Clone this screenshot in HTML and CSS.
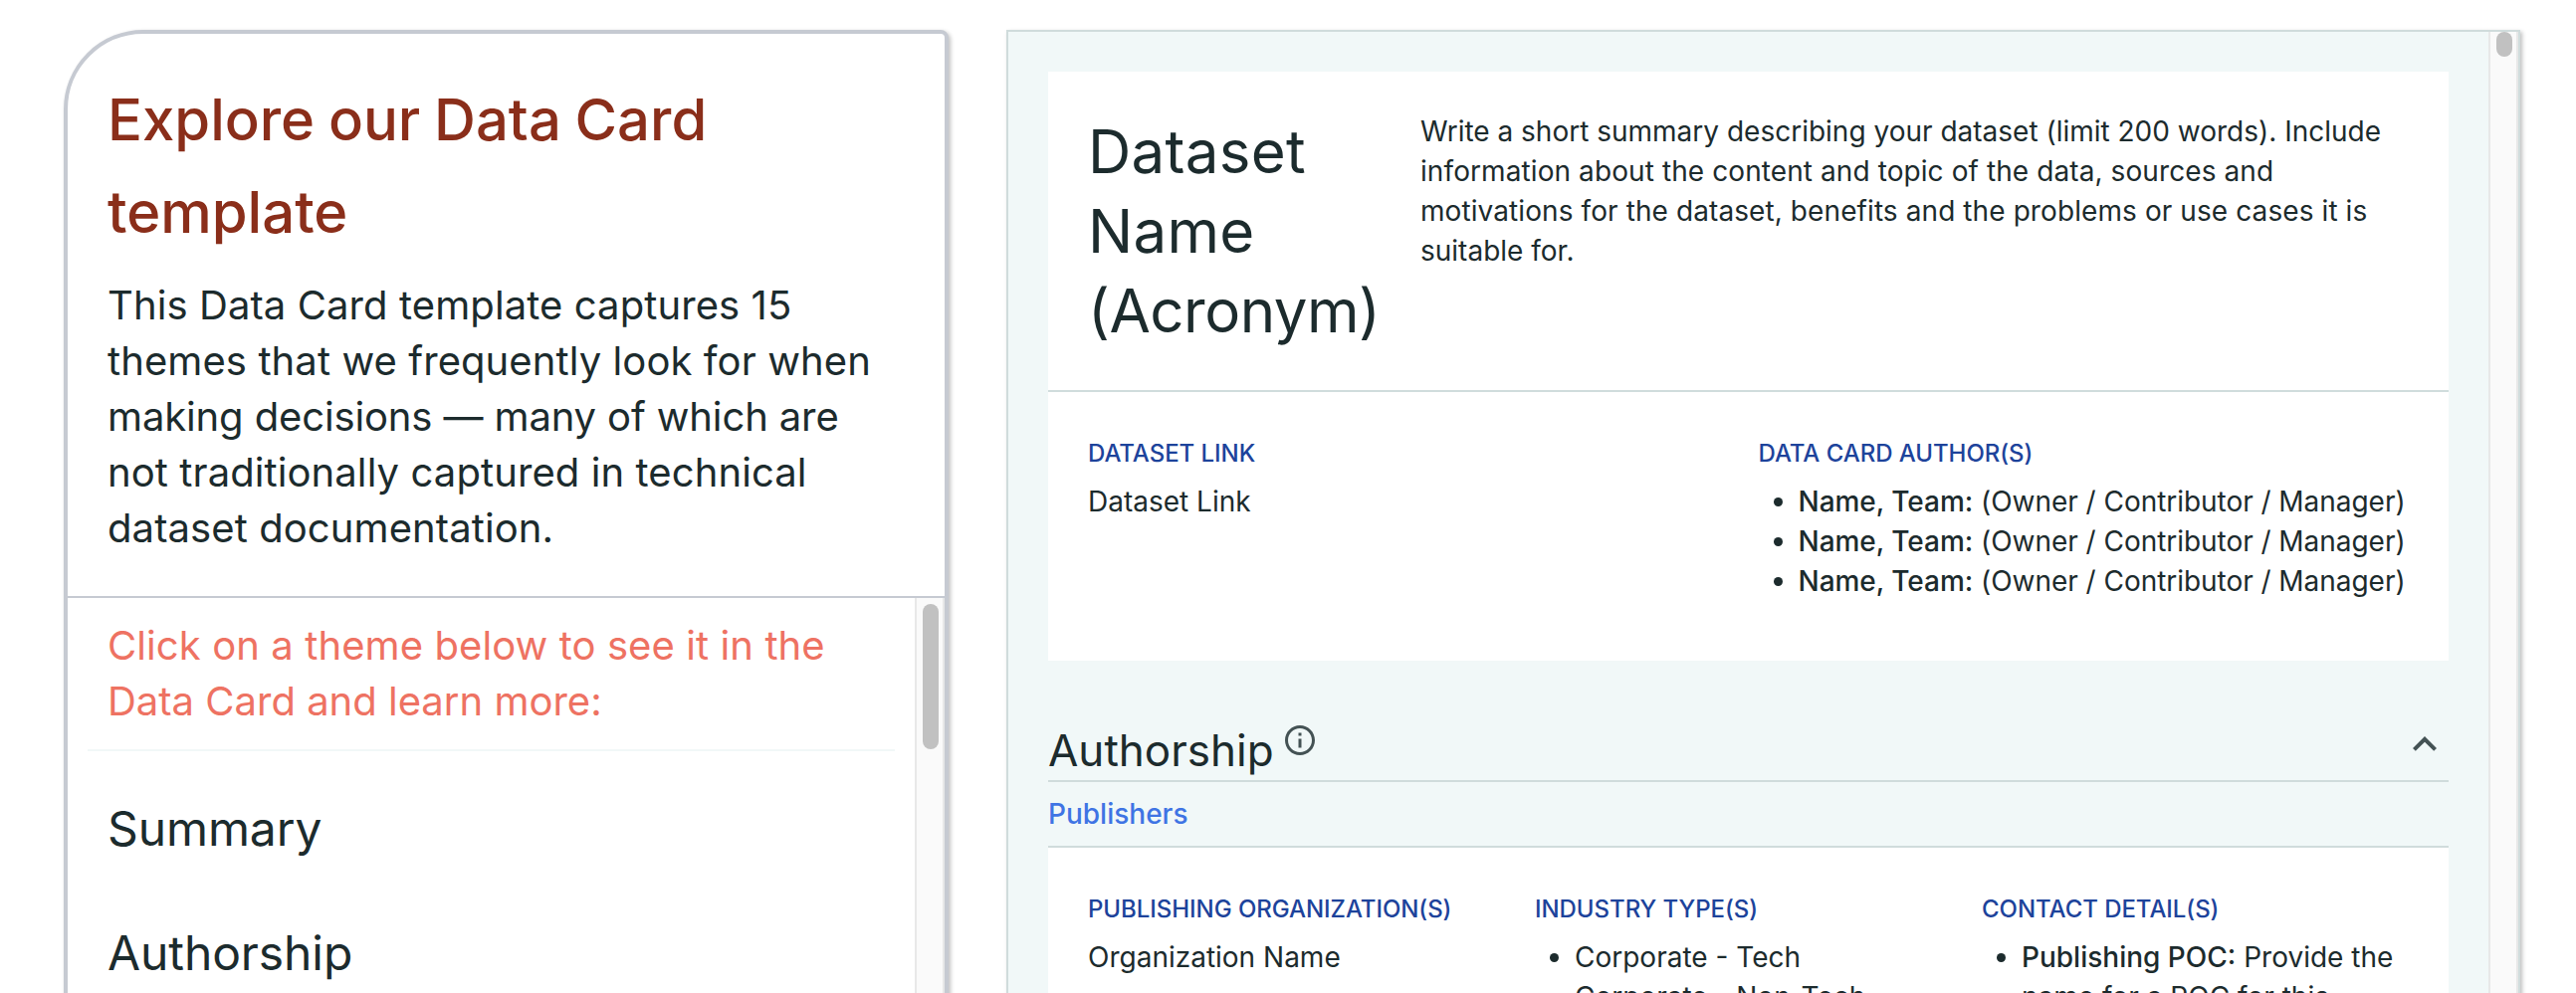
FILE: index.html
```html
<!DOCTYPE html>
<html lang="en">
<head>
<meta charset="utf-8">
<title>Data Card template</title>
<link rel="stylesheet" href="styles.css">
</head>
<body>
<main class="layout">
  <aside class="guide">
    <header class="guide-intro">
      <h1 class="guide-title">Explore our Data Card template</h1>
      <p class="guide-text">This Data Card template captures 15 themes that we frequently look for when <span class="tight">making decisions — many of which are</span> not traditionally captured in technical dataset documentation.</p>
    </header>
    <div class="guide-body">
      <div class="guide-scroll">
        <p class="guide-hint"><span class="wide">Click on a theme below to see it in the</span> Data Card and learn more:</p>
        <ul class="themes">
          <li class="theme">Summary</li>
          <li class="theme">Authorship</li>
        </ul>
      </div>
      <div class="track track-guide"><div class="thumb thumb-guide"></div></div>
    </div>
  </aside>

  <section class="preview">
    <div class="preview-scroll">
      <article class="card">
        <div class="summary">
          <h2 class="dataset-name">Dataset Name <span class="acronym">(Acronym)</span></h2>
          <p class="dataset-text">Write a short summary describing your dataset (limit 200 words). Include <span class="wide">information about the content and topic of the data, sources and motivations for the dataset, benefits and the problems or use cases it is</span> suitable for.</p>
        </div>
        <div class="fields fields-two">
          <div class="field">
            <h3 class="label">Dataset Link</h3>
            <p class="value">Dataset Link</p>
          </div>
          <div class="field">
            <h3 class="label">Data Card Author(s)</h3>
            <ul class="list authors">
              <li><b>Name, Team:</b> (Owner / Contributor / Manager)</li>
              <li><b>Name, Team:</b> (Owner / Contributor / Manager)</li>
              <li><b>Name, Team:</b> (Owner / Contributor / Manager)</li>
            </ul>
          </div>
        </div>
      </article>

      <div class="section-head">
        <h2 class="section-title">Authorship</h2>
        <svg class="info" viewBox="0 0 24 24"><path d="M11 7h2v2h-2zm0 4h2v6h-2zm1-9C6.48 2 2 6.48 2 12s4.480 10 10 10 10-4.480 10-10S17.520 2 12 2zm0 18c-4.410 0-8-3.590-8-8s3.590-8 8-8 8 3.590 8 8-3.590 8-8 8z"/></svg>
        <svg class="chevron" viewBox="0 0 24 24"><path d="M12 8l-6 6 1.410 1.410L12 10.830l4.590 4.580L18 14z"/></svg>
      </div>
      <h3 class="subsection">Publishers</h3>
      <div class="fields fields-three">
        <div class="field">
          <h3 class="label">Publishing Organization(s)</h3>
          <p class="value">Organization Name</p>
        </div>
        <div class="field">
          <h3 class="label">Industry Type(s)</h3>
          <ul class="list">
            <li>Corporate - Tech</li>
            <li>Corporate - Non-Tech</li>
          </ul>
        </div>
        <div class="field">
          <h3 class="label">Contact Detail(s)</h3>
          <ul class="list">
            <li><b>Publishing POC:</b> Provide the name for a POC for this</li>
          </ul>
        </div>
      </div>
    </div>
    <div class="track track-preview"><div class="thumb thumb-preview"></div></div>
  </section>
</main>
</body>
</html>
```

FILE: styles.css
```css
* { box-sizing: border-box; margin: 0; padding: 0; }

html { height: 998px; overflow: hidden; }
body {
  height: 998px;
  overflow: hidden;
  background: #fff;
  color: #1c2b2d;
  font-family: Inter, "Liberation Sans", sans-serif;
  font-size: 28px;
  line-height: 40px;
}

.layout {
  display: flex;
  gap: 58px;
  height: 1100px;
  padding: 30px 56px 0 64px;
}

/* Left guide panel */
.guide {
  display: flex;
  flex-direction: column;
  width: 889px;
  flex: none;
  border: 4px solid #c6cad2;
  border-radius: 80px 8px 8px 8px;
  background: #fff;
  box-shadow: 2px 2px 4px rgba(0, 0, 0, .25);
}
.guide-intro {
  height: 567px;
  flex: none;
  padding: 40px 60px 0 40px;
  border-bottom: 2px solid #c6cad2;
}
.guide-title {
  margin-bottom: 19px;
  color: #8a2e1a;
  font-size: 58px;
  font-weight: 500;
  line-height: 93px;
  word-spacing: -1.7px;
}
.guide-text { font-size: 40px; line-height: 56px; letter-spacing: .09px; }
.tight { letter-spacing: -.13px; }
.wide { letter-spacing: .09px; }
.guide-body { display: flex; flex: 1; }
.guide-scroll { flex: 1; padding: 0 20px; }
.guide-hint {
  height: 154px;
  padding: 20px 20px 0;
  border-bottom: 2px solid #f1f8f8;
  color: #ee7262;
  font-size: 40px;
  line-height: 56px;
}
.themes { padding-top: 15px; list-style: none; }
.theme { padding-left: 20px; font-size: 48px; line-height: 125px; letter-spacing: -.1px; }

/* Scrollbars */
.track {
  flex: none;
  border: solid #e8e8e8;
  border-width: 0 2px;
  background: #fafafa;
}
.track-guide { width: 30px; padding: 6px 4px 0 6px; }
.track-preview { width: 30px; padding: 0 4px 0 6px; }
.thumb { width: 16px; border-radius: 8px; background: #c1c1c1; }
.thumb-guide { height: 146px; }
.thumb-preview { height: 25px; }

/* Data card preview */
.preview {
  display: flex;
  flex: 1;
  border: 2px solid #d0dcdc;
  background: #f1f8f8;
  box-shadow: 2px 2px 4px rgba(0, 0, 0, .25);
}
.preview-scroll { flex: 1; padding: 40px 40px 0; }
.card { background: #fff; }
.summary {
  display: flex;
  height: 322px;
  padding: 40px 40px 0;
  border-bottom: 2px solid #d0dcdc;
}
.dataset-name {
  width: 334px;
  flex: none;
  font-size: 60px;
  font-weight: 400;
  line-height: 80px;
  letter-spacing: .3px;
}
.acronym { letter-spacing: -.5px; }
.dataset-text { flex: 1; }
.fields {
  display: grid;
  gap: 20px;
  padding: 40px 40px 60px;
  background: #fff;
}
.fields-two { grid-template-columns: repeat(2, 1fr); }
.fields-three { grid-template-columns: repeat(3, 1fr); }
.label {
  padding-top: 2px;
  margin-bottom: 8px;
  color: #1d439b;
  font-size: 24px;
  font-weight: 500;
  letter-spacing: -.05px;
  text-transform: uppercase;
}
.list { padding-left: 40px; }
.list b { font-weight: 500; }
.authors { letter-spacing: -.04px; }

.section-head {
  display: flex;
  height: 122px;
  padding-top: 60px;
  border-bottom: 2px solid #d0dcdc;
}
.section-title { font-size: 44px; font-weight: 400; line-height: 60px; }
.info { width: 36px; height: 36px; margin: 2px 0 0 8px; fill: #445254; }
.chevron { width: 48px; height: 48px; margin-left: auto; fill: #445254; }
.subsection {
  height: 66px;
  padding-top: 12px;
  border-bottom: 2px solid #d0dcdc;
  color: #3f74e4;
  font-size: 28px;
  font-weight: 500;
}
```
